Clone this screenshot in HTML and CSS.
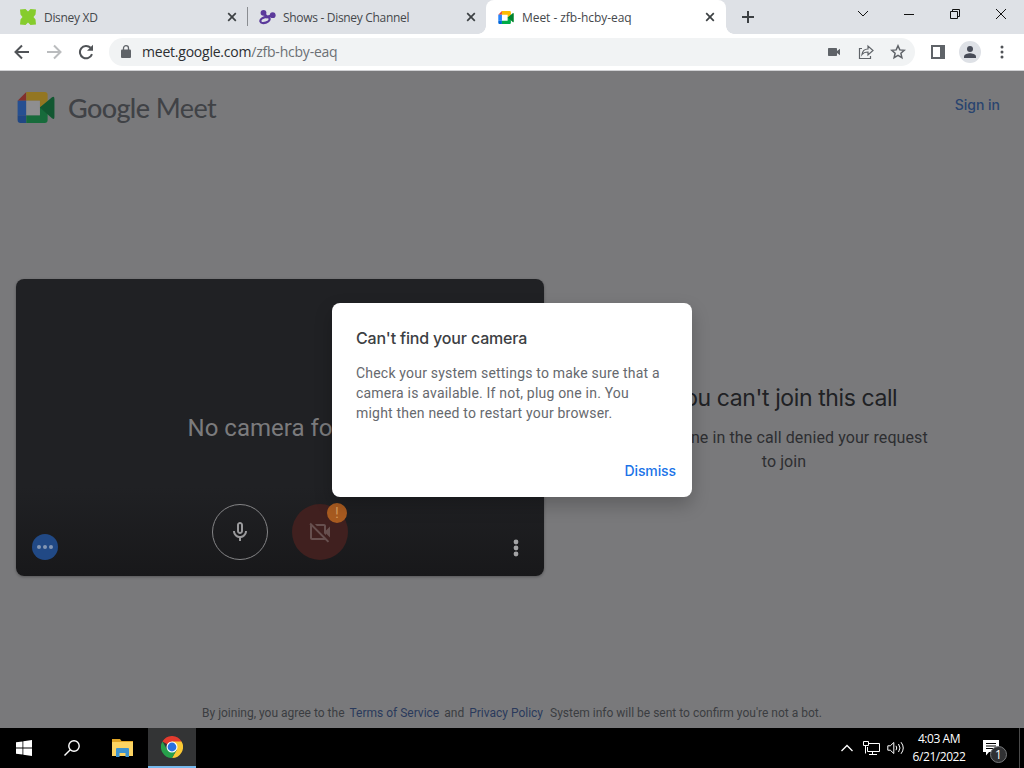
FILE: index.html
```html
<!DOCTYPE html>
<html lang="en">
<head>
    <meta charset="UTF-8">
    <meta name="viewport" content="width=device-width, initial-scale=1.0">
    <title>Meet - zfb-hcby-eaq</title>
    <link rel="stylesheet" href="styles.css">
</head>
<body>
    <div class="tabs">
        <div class="tab tab-first">
            <svg class="favicon" width="16" height="16" viewBox="0 0 16 16"><path fill="#86cc2d" d="M0 .5L5.500 0 8 2.500 10.500 0 16 .5 15.500 5.500 13.500 8l2 2.500.5 5-5.500.5L8 13.500 5.500 16 0 15.500l.5-5 2-2.500-2-2.500z"/></svg>
            <span class="tab-title">Disney XD</span>
            <svg class="close" width="10" height="10" viewBox="0 0 10 10"><path d="M1.200 1.200l7.600 7.600M8.800 1.200l-7.600 7.600"/></svg>
        </div>
        <div class="tab tab-second">
            <svg class="favicon" width="17" height="16" viewBox="0 0 17 16"><g fill="none" stroke="#5b3a9b"><ellipse cx="6" cy="11" rx="4.800" ry="2.800" stroke-width="2.200" transform="rotate(-18 6 11)"/><path stroke-width="2.600" d="M4.500 4l3.500 4 5-1.500"/></g><circle cx="4.500" cy="3.800" r="2.900" fill="#5b3a9b"/><circle cx="13.700" cy="6.200" r="2.900" fill="#5b3a9b"/></svg>
            <span class="tab-title">Shows - Disney Channel</span>
            <svg class="close" width="10" height="10" viewBox="0 0 10 10"><path d="M1.200 1.200l7.600 7.600M8.800 1.200l-7.600 7.600"/></svg>
        </div>
        <div class="tab tab-active">
            <svg class="favicon" width="16" height="13" viewBox="0 0 38 32"><path fill="#ea4335" d="M0 9l9-9v9z"/><path fill="#fbbc04" d="M9 0h19q3 0 3 3v7l-8 6V9H9z"/><path fill="#2684fc" d="M0 9h9v15H0z"/><path fill="#0066da" d="M0 24h9v8H3q-3 0-3-3z"/><path fill="#00ac47" d="M9 24h14v-8l8-6v19q0 3-3 3H9z"/><path fill="#00832d" d="M23 16L35.500 5.500Q38 4 38 7v19q0 3-2.500 1z"/></svg>
            <span class="tab-title">Meet - zfb-hcby-eaq</span>
            <svg class="close" width="10" height="10" viewBox="0 0 10 10"><path d="M1.200 1.200l7.600 7.600M8.800 1.200l-7.600 7.600"/></svg>
        </div>
        <svg class="new-tab" width="12" height="12" viewBox="0 0 12 12"><path d="M6 0v12M0 6h12"/></svg>
        <div class="window-buttons">
            <svg width="12" height="12" viewBox="0 0 12 12"><path d="M1 3l5 5 5-5"/></svg>
            <svg width="12" height="12" viewBox="0 0 12 12"><path d="M1 6.500h10"/></svg>
            <svg width="12" height="12" viewBox="0 0 12 12"><path d="M1.500 3.500h7v7h-7zM3.500 3.500v-2h7v7h-2"/></svg>
            <svg width="12" height="12" viewBox="0 0 12 12"><path d="M1 1l10 10M11 1L1 11"/></svg>
        </div>
    </div>

    <div class="toolbar">
        <svg class="nav" width="16" height="16" viewBox="0 0 16 16"><path d="M15 8H2M8 1.500L1.500 8 8 14.500"/></svg>
        <svg class="nav nav-off" width="16" height="16" viewBox="0 0 16 16"><path d="M1 8h13M8 1.500L14.500 8 8 14.500"/></svg>
        <svg class="nav" width="16" height="16" viewBox="0 0 16 16"><path d="M14 10.200A6.200 6.200 0 1 1 12.600 3.800"/><path class="solid" d="M15 .8v6H9z"/></svg>
        <div class="address">
            <svg class="lock" width="10" height="13" viewBox="0 0 10 13"><path fill="#5f6368" d="M1 4.500h8q1 0 1 1V12q0 1-1 1H1q-1 0-1-1V5.500q0-1 1-1z"/><path fill="none" stroke="#5f6368" stroke-width="1.300" d="M2.500 5V3a2.500 2.300 0 0 1 5 0v2"/></svg>
            <span class="url">meet.google.com<span class="path">/zfb-hcby-eaq</span></span>
            <svg width="12" height="8" viewBox="0 0 12 8"><path fill="#5f6368" d="M.7 0h7.600q.7 0 .7.700V3l3-2.300v6.600L9 5v2.300q0 .7-.7.700H.7Q0 8 0 7.300V.7Q0 0 .7 0z"/></svg>
            <svg class="share" width="16" height="16" viewBox="0 0 16 16"><path d="M4 4.500H1.500v10h11V12M4 10.500c.5-4 3-5.500 6-5.500V2l5 4.500-5 4.500V8C7.500 8 5.500 8.500 4 10.500z"/></svg>
            <svg class="star" width="16" height="16" viewBox="0 0 16 16"><path d="M8 1.800l1.800 4.100 4.400.4-3.300 3 1 4.400L8 11.400l-3.900 2.300 1-4.400-3.300-3 4.400-.4z"/></svg>
        </div>
        <svg class="side-panel" width="14" height="14" viewBox="0 0 14 14"><path fill="#5f6368" fill-rule="evenodd" d="M0 0h14v14H0zM2 2v10h7V2z"/></svg>
        <div class="avatar">
            <svg width="12" height="12" viewBox="0 0 12 12"><circle cx="6" cy="3" r="3"/><path d="M0 12v-1.500C0 8.500 4 7.300 6 7.300s6 1.200 6 3.200V12z"/></svg>
        </div>
        <svg class="menu" width="4" height="14" viewBox="0 0 4 14"><circle cx="2" cy="2" r="1.500"/><circle cx="2" cy="7" r="1.500"/><circle cx="2" cy="12" r="1.500"/></svg>
    </div>

    <div class="page">
        <div class="header">
            <svg class="logo" width="38" height="31" viewBox="0 0 38 32"><path fill="#82302d" d="M0 9l9-9v9z"/><path fill="#937622" d="M9 0h19q3 0 3 3v7l-8 6V9H9z"/><path fill="#264f91" d="M0 9h9v15H0z"/><path fill="#204784" d="M0 24h9v8H3q-3 0-3-3z"/><path fill="#176b3b" d="M9 24h14v-8l8-6v19q0 3-3 3H9z"/><path fill="#8e8e90" d="M9 9h14v15H9z"/><path fill="#125731" d="M23 16L35.500 5.500Q38 4 38 7v19q0 3-2.500 1z"/></svg>
            <span class="brand"><span class="google">Google</span> Meet</span>
            <a class="sign-in">Sign in</a>
        </div>

        <div class="main">
            <div class="preview">
                <div class="no-camera">No camera found</div>
                <div class="controls">
                    <div class="more-blue"><i></i><i></i><i></i></div>
                    <div class="round mic">
                        <svg width="24" height="24" viewBox="0 0 24 24"><path d="M12 14c1.660 0 3-1.340 3-3V5c0-1.660-1.340-3-3-3S9 3.340 9 5v6c0 1.660 1.340 3 3 3zm-1-9c0-.55.45-1 1-1s1 .45 1 1v6c0 .55-.45 1-1 1s-1-.45-1-1V5zm6 6c0 2.760-2.240 5-5 5s-5-2.240-5-5H5c0 3.530 2.610 6.430 6 6.920V21h2v-3.080c3.390-.49 6-3.390 6-6.920h-2z"/></svg>
                    </div>
                    <div class="round cam">
                        <svg width="24" height="24" viewBox="0 0 24 24"><path d="M18 10.480V6c0-1.100-.9-2-2-2H6.830l2 2H16v7.170l2 2v-1.650l4 3.980v-11l-4 3.980zM16 16L6 6 4 4 2.810 2.810 1.390 4.220l.85.850C2.090 5.350 2 5.660 2 6v12c0 1.100.9 2 2 2h12c.34 0 .65-.09.930-.24l2.850 2.850 1.410-1.410L18 17.990l-2-2zM4 18V6.830L15.170 18H4z"/></svg>
                        <span class="alert">!</span>
                    </div>
                    <svg class="options" width="6" height="18" viewBox="0 0 6 18"><circle cx="3" cy="3" r="2.400"/><circle cx="3" cy="9" r="2.400"/><circle cx="3" cy="15" r="2.400"/></svg>
                </div>
            </div>
            <div class="message">
                <h1>You can't join this call</h1>
                <p>Someone in the call denied your request to join</p>
            </div>
        </div>

        <div class="legal">
            <span>By joining, you agree to the</span>
            <a>Terms of Service</a>
            <span>and</span>
            <a>Privacy Policy</a>
            <span class="system-info">System info will be sent to confirm you're not a bot.</span>
        </div>

        <div class="dialog">
            <h2>Can't find your camera</h2>
            <p>Check your system settings to make sure that a camera is available. If not, plug one in. You might then need to restart your browser.</p>
            <button type="button">Dismiss</button>
        </div>
    </div>

    <div class="taskbar">
        <div class="task">
            <svg width="16" height="16" viewBox="0 0 16 16"><path fill="#fff" d="M0 2.300l6.500-.9v6.100H0zM7.300 1.300L16 0v7.500H7.300zM0 8.400h6.500v6.200L0 13.700zM7.300 8.400H16V16l-8.700-1.300z"/></svg>
        </div>
        <div class="task">
            <svg width="16" height="16" viewBox="0 0 16 16"><g fill="none" stroke="#fff" stroke-width="1.400"><circle cx="10" cy="6" r="5.200"/><path d="M6.300 9.700L.5 15.500"/></g></svg>
        </div>
        <div class="task task-files">
            <svg width="21" height="18" viewBox="0 0 21 18"><path fill="#e0a526" d="M0 0h8l1.500 2H21v5H0z"/><path fill="#fcd462" d="M0 3h21v14H0z"/><path fill="#3d93cf" d="M4 10q0-1 1-1h11q1 0 1 1v8h-3.500v-4h-6v4H4z"/></svg>
        </div>
        <div class="task task-open">
            <svg width="22" height="22" viewBox="0 0 22 22"><path fill="#e33b2e" d="M11 11L1.470 5.500A11 11 0 0 1 20.530 5.500z"/><path fill="#fcc934" d="M11 11V5.500h9.530A11 11 0 0 1 11 22l4.760-8.250z"/><path fill="#27a04b" d="M11 11l4.760 2.750L11 22A11 11 0 0 1 1.470 5.500l4.770 8.250z"/><circle cx="11" cy="11" r="5.500" fill="#fff"/><circle cx="11" cy="11" r="4.400" fill="#2a70e0"/></svg>
        </div>
        <div class="tray">
            <svg width="12" height="8" viewBox="0 0 12 8"><path stroke-width="1.300" d="M.5 7L6 1.500 11.500 7"/></svg>
            <svg class="network" width="17" height="14" viewBox="0 0 17 14"><path d="M5.500 2.500h11v8h-12V6M9.500 10.500v3M6 13.500h8M.5.500h5v4h-5zM2.500 4.500v8"/></svg>
            <svg class="sound" width="18" height="14" viewBox="0 0 18 14"><path d="M.8 4.800h2.500L6.800 1.500v11L3.300 9.200H.8zM9 4.800q1.500 2.200 0 4.400M11.500 3q3 4 0 8M14 1.200q4.500 5.800 0 11.600"/></svg>
            <div class="clock"><span>4:03 AM</span><span>6/21/2022</span></div>
            <div class="notes">
                <svg width="16" height="16" viewBox="0 0 16 16"><path fill="#fff" fill-rule="evenodd" d="M0 0h16v12H6l-3 3.500V12H0zM3 3v1h10V3zM3 5.500v1h10v-1zM3 8v1h7V8z"/></svg>
                <span class="count">1</span>
            </div>
            <div class="edge"></div>
        </div>
    </div>
</body>
</html>
```
FILE: styles.css
```css
* {
    box-sizing: border-box;
}

body {
    margin: 0;
    width: 1024px;
    height: 768px;
    overflow: hidden;
    display: flex;
    flex-direction: column;
    font-family: Roboto, sans-serif;
}

svg {
    display: block;
    flex: none;
}

/* browser tabs */
.tabs {
    height: 34px;
    display: flex;
    align-items: center;
    background-color: #dee1e6;
    font-family: "Open Sans", sans-serif;
    font-size: 12px;
    letter-spacing: -0.31px;
    color: #45484c;
}

.tab {
    height: 34px;
    display: flex;
    align-items: center;
    flex: none;
    white-space: nowrap;
}

.tab-first {
    width: 248px;
    padding: 0 11px 0 20px;
    background: linear-gradient(#8a8d91, #8a8d91) right 7px / 1px 19px no-repeat;
}

.tab-second {
    width: 238px;
    padding: 0 10px 0 11px;
}

.tab-second .tab-title {
    margin-left: 7px;
}

.tab-active {
    width: 240px;
    padding: 0 11px 0 12px;
    background-color: #fff;
    border-radius: 8px 8px 0 0;
    position: relative;
    letter-spacing: -0.05px;
}

.tab-active::before,
.tab-active::after {
    content: "";
    position: absolute;
    bottom: 0;
    width: 8px;
    height: 8px;
}

.tab-active::before {
    left: -8px;
    background: radial-gradient(circle at 0 0, transparent 7.5px, #fff 8px);
}

.tab-active::after {
    right: -8px;
    background: radial-gradient(circle at 100% 0, transparent 7.5px, #fff 8px);
}

.tab-title {
    margin-left: 8px;
    flex: 1;
}

.close {
    fill: none;
    stroke: #3c4043;
    stroke-width: 1.7;
}

.new-tab {
    margin-left: 16px;
    stroke: #3c4043;
    stroke-width: 2;
}

.window-buttons {
    display: flex;
    gap: 34px;
    margin: -6px 17px 0 auto;
    fill: none;
    stroke: #111;
}

/* toolbar */
.toolbar {
    height: 37px;
    display: flex;
    align-items: center;
    padding: 0 20px 1px 14px;
    background-color: #fff;
    border-bottom: 1px solid #d0d1d4;
}

.nav {
    margin-right: 16px;
    fill: none;
    stroke: #505357;
    stroke-width: 2;
}

.nav .solid {
    fill: #505357;
    stroke: none;
}

.nav-off {
    stroke: #babcbe;
}

.address {
    flex: none;
    width: 806px;
    height: 28px;
    margin-left: -1px;
    padding: 0 9px 0 12px;
    display: flex;
    align-items: center;
    border-radius: 14px;
    background-color: #f1f3f4;
}

.url {
    flex: 1;
    margin-left: 11px;
    font-family: "Open Sans", sans-serif;
    font-size: 14px;
    letter-spacing: -0.22px;
    color: #2c2e31;
}

.url .path {
    color: #6c7074;
}

.share,
.star {
    margin-left: 18px;
    fill: none;
    stroke: #5f6368;
    stroke-width: 1.2;
}

.star {
    margin-left: 16px;
    stroke-width: 1.5;
}

.side-panel {
    margin-left: 16px;
}

.avatar {
    width: 22px;
    height: 22px;
    margin-left: 14px;
    display: flex;
    align-items: center;
    justify-content: center;
    border-radius: 50%;
    background-color: #dee1e6;
    fill: #484c58;
}

.menu {
    margin-left: auto;
    fill: #505357;
}

/* page under the scrim */
.page {
    height: 657px;
    position: relative;
    background-color: #79797b;
    display: flex;
    flex-direction: column;
}

.header {
    height: 72px;
    display: flex;
    align-items: center;
    padding: 0 24px 0 17px;
}

.brand {
    margin-left: 13px;
    font-family: Lato, sans-serif;
    font-size: 27px;
    letter-spacing: -0.6px;
    color: #404246;
}

.google {
    font-weight: 500;
}

.sign-in {
    margin: -6px 0 0 auto;
    font-family: Inter, sans-serif;
    font-size: 14px;
    font-weight: 500;
    color: #29446f;
}

.main {
    flex: 1;
    display: flex;
    align-items: center;
    padding: 15px 0 0 16px;
}

.preview {
    flex: none;
    width: 528px;
    height: 297px;
    display: flex;
    flex-direction: column;
    justify-content: flex-end;
    border-radius: 8px;
    background: linear-gradient(#202124 70%, #18181a);
    box-shadow: 0 1px 3px rgba(0, 0, 0, 0.3);
}

.no-camera {
    text-align: center;
    font-size: 24px;
    line-height: 28px;
    color: #7b7b7d;
    margin-bottom: 62px;
}

.controls {
    height: 72px;
    display: flex;
    padding: 0 25px 16px 16px;
}

.more-blue {
    width: 26px;
    height: 26px;
    margin: 30px 154px 0 0;
    display: flex;
    align-items: center;
    justify-content: center;
    gap: 2px;
    border-radius: 50%;
    background-color: #214985;
}

.more-blue i {
    width: 4px;
    height: 4px;
    border-radius: 50%;
    background-color: #8496b3;
}

.round {
    width: 56px;
    height: 56px;
    display: flex;
    align-items: center;
    justify-content: center;
    border-radius: 50%;
}

.mic {
    border: 1px solid #848486;
    fill: #9a9a9c;
}

.cam {
    margin-left: 24px;
    position: relative;
    background-color: #40201f;
    fill: #67504f;
}

.alert {
    position: absolute;
    top: -1px;
    right: 1px;
    width: 20px;
    height: 20px;
    border-radius: 50%;
    background-color: #a85b20;
    color: #d79a5c;
    font-size: 15px;
    line-height: 20px;
    text-align: center;
}

.options {
    margin: 35px 0 0 auto;
    fill: #a3a3a5;
}

.message {
    width: 304px;
    margin: 0 auto 0 88px;
    text-align: center;
    color: #202124;
}

.message h1 {
    margin: 0 -10px 12px;
    font-family: Inter, sans-serif;
    font-size: 23px;
    font-weight: 400;
    letter-spacing: -0.4px;
    line-height: 32px;
    white-space: nowrap;
}

.message p {
    margin: 0;
    font-size: 16px;
    line-height: 24px;
    letter-spacing: 0.1px;
    color: #2d2e31;
}

.legal {
    height: 31px;
    padding-left: 202px;
    display: flex;
    gap: 5px;
    font-size: 12px;
    line-height: 33px;
    white-space: nowrap;
    color: #3b3d41;
}

.legal a {
    color: #2a3a5c;
}

.system-info {
    margin-left: 2px;
}

/* camera dialog */
.dialog {
    position: absolute;
    left: 332px;
    top: 232px;
    width: 360px;
    height: 194px;
    padding: 24px 16px 12px 24px;
    display: flex;
    flex-direction: column;
    border-radius: 8px;
    background-color: #fff;
    box-shadow: 0 8px 18px rgba(0, 0, 0, 0.22);
}

.dialog h2 {
    margin: 0 0 14px;
    font-family: Inter, sans-serif;
    font-size: 16px;
    font-weight: 500;
    letter-spacing: -0.17px;
    line-height: 22px;
    color: #3c4043;
}

.dialog p {
    margin: 0 8px 0 0;
    font-size: 14px;
    line-height: 20px;
    letter-spacing: 0.2px;
    color: #66696e;
}

.dialog button {
    margin: auto 0 0 auto;
    padding: 0;
    border: none;
    background: none;
    font-family: Inter, sans-serif;
    font-size: 14px;
    font-weight: 500;
    letter-spacing: -0.1px;
    line-height: 28px;
    color: #1a73e8;
}

/* taskbar */
.taskbar {
    height: 40px;
    display: flex;
    background-color: #000;
}

.task {
    width: 48px;
    display: flex;
    align-items: center;
    justify-content: center;
}

.task-files {
    width: 52px;
}

.task-open {
    background-color: #333435;
    border-bottom: 2px solid #76b9ed;
}

.tray {
    margin-left: auto;
    display: flex;
    align-items: center;
    color: #fff;
    fill: none;
    stroke: #fff;
}

.network {
    margin-left: 10px;
}

.sound {
    margin-left: 7px;
}

.clock {
    width: 54px;
    margin-left: 7px;
    display: flex;
    flex-direction: column;
    align-items: center;
    font-family: "Open Sans", sans-serif;
    font-size: 12px;
    letter-spacing: -0.45px;
    line-height: 18px;
    white-space: nowrap;
    stroke: none;
}

.notes {
    position: relative;
    margin-left: 17px;
    stroke: none;
}

.count {
    position: absolute;
    left: 7px;
    top: 6px;
    width: 17px;
    height: 17px;
    border: 1px solid #77797b;
    border-radius: 50%;
    background-color: #303133;
    font-family: "Open Sans", sans-serif;
    font-size: 12px;
    line-height: 15px;
    text-align: center;
}

.edge {
    width: 1px;
    height: 40px;
    margin: 0 4px 0 20px;
    background-color: #4a4a4a;
}
```
